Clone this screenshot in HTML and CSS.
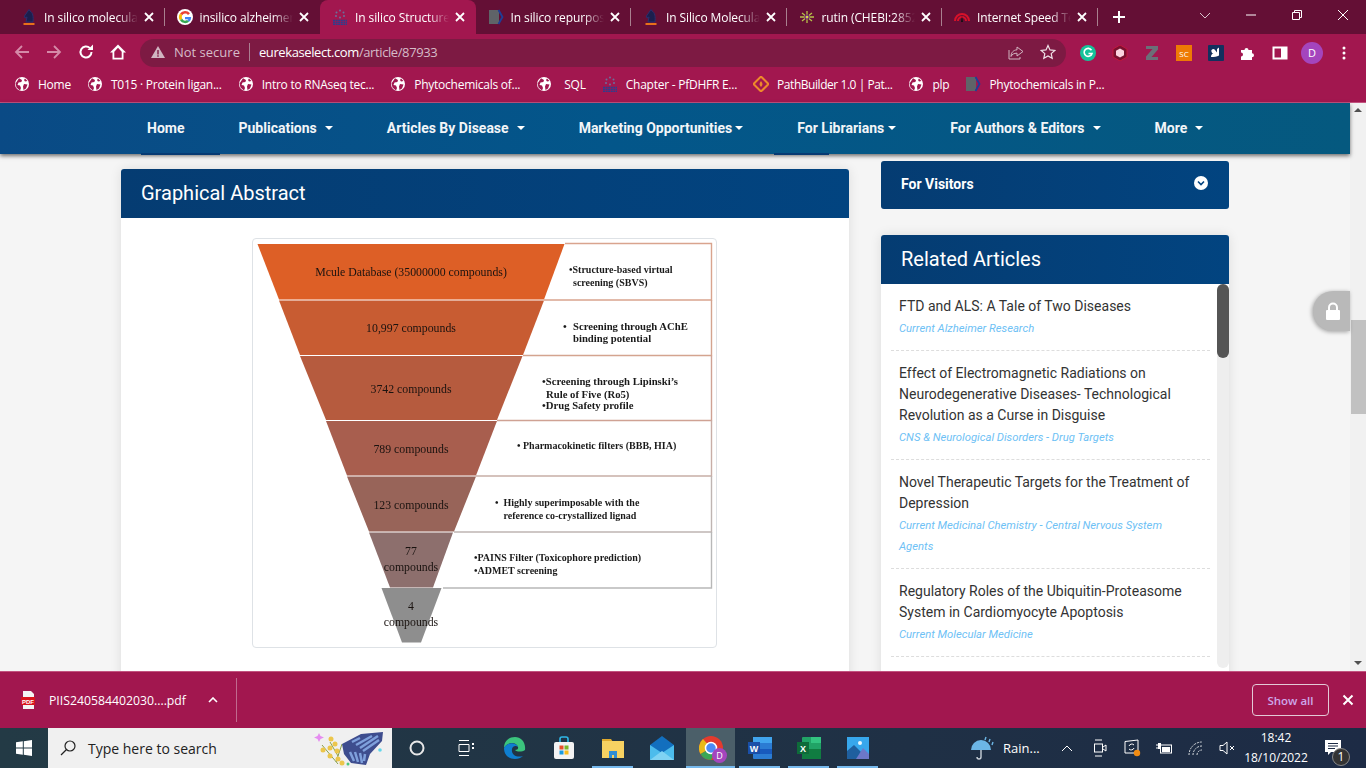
FILE: index.html
```html
<!DOCTYPE html>
<html lang="en">
<head>
  <meta charset="UTF-8">
  <meta name="viewport" content="width=device-width, initial-scale=1.0">
  <title>In silico Structure</title>
  <link rel="stylesheet" href="styles.css">
</head>
<body>

<svg class="defs">
  <symbol id="globe" viewBox="0 0 16 16">
    <circle cx="8" cy="8" r="7" fill="#fff"/>
    <path d="M5 2.200 8 4 7.400 6 4.500 6.500 3.500 9 6 9.500 7 12 6 14.500 2.500 11.500 1.500 7.500ZM10 8l3.500.5L12 12.500 9.500 14 9 10.500ZM11 2.500l2.500 2.500-2.500.5-1-1.500Z" fill="#a2174f"/>
  </symbol>
  <symbol id="close" viewBox="0 0 12 12">
    <path d="M2 2l8 8M10 2l-8 8" stroke="#fff" stroke-width="1.800" fill="none"/>
  </symbol>
  <symbol id="bentham" viewBox="0 0 16 16">
    <g fill="#6a6f9c"><circle cx="8" cy="1.500" r="1"/><circle cx="4.500" cy="3.500" r="1"/><circle cx="11.500" cy="3.500" r="1"/><circle cx="4" cy="7" r="1"/><circle cx="12" cy="7" r="1"/><circle cx="8" cy="8.500" r="1"/></g>
    <path d="M1 11.500h14M1 13.500h14M1 15.500h14" stroke="#2c3f8f" stroke-width="1.300" stroke-dasharray="2 .6"/>
  </symbol>
  <symbol id="knight" viewBox="0 0 16 16">
    <path d="M5 13 6 8 4 9 3.500 7 7 2l1-1.500L9 2c3 1.500 3.500 6 3 11Z" fill="#1b1f4d" stroke="#2a2f6e"/>
    <rect x="2.500" y="14" width="11" height="2" fill="#e8701a"/>
  </symbol>
  <symbol id="book" viewBox="0 0 16 16">
    <path d="M1 1h9l1 2v10l-1 2H1Z" fill="#5f6368"/>
    <path d="M10.500 1 14.500 8l-4 7" fill="none" stroke="#1d3f9a" stroke-width="1.800"/>
  </symbol>
</svg>

<div class="tabstrip">
  <div class="tab sep"><svg class="fav"><use href="#knight"/></svg><span class="tab-title">In silico molecular</span><svg class="tab-x"><use href="#close"/></svg></div>
  <div class="tab">
    <svg class="fav" viewBox="0 0 16 16">
      <circle cx="8" cy="8" r="8" fill="#fff"/>
      <path d="M13 4.200A6.300 6.300 0 0 0 3 4.500L5.200 6.300A3.500 3.500 0 0 1 11 5.900Z" fill="#ea4335"/>
      <path d="M3 4.500a6.300 6.300 0 0 0 0 7L5.200 9.700a3.500 3.500 0 0 1 0-3.400Z" fill="#fbbc05"/>
      <path d="M3 11.500a6.300 6.300 0 0 0 9.200 1.200L10.100 11a3.500 3.500 0 0 1-4.900-1.300Z" fill="#34a853"/>
      <path d="M14.200 8H8v2.300h3.500a3 3 0 0 1-1.400 .7l2.100 1.700A6.300 6.300 0 0 0 14.200 8Z" fill="#4285f4"/>
    </svg>
    <span class="tab-title">insilico alzheimer</span><svg class="tab-x"><use href="#close"/></svg></div>
  <div class="tab active"><svg class="fav"><use href="#bentham"/></svg><span class="tab-title">In silico Structure</span><svg class="tab-x"><use href="#close"/></svg></div>
  <div class="tab sep"><svg class="fav"><use href="#book"/></svg><span class="tab-title">In silico repurpos</span><svg class="tab-x"><use href="#close"/></svg></div>
  <div class="tab sep"><svg class="fav"><use href="#knight"/></svg><span class="tab-title">In Silico Molecula</span><svg class="tab-x"><use href="#close"/></svg></div>
  <div class="tab sep">
    <svg class="fav" viewBox="0 0 16 16"><path d="M8 2v12M3 4l10 8M13 4 3 12M1 8h14" stroke="#b7c24a" stroke-width="1.300"/><circle cx="8" cy="8" r="2.500" fill="#64107a"/><circle cx="8" cy="8" r="1.500" fill="#d7d84a"/></svg>
    <span class="tab-title">rutin (CHEBI:2852</span><svg class="tab-x"><use href="#close"/></svg></div>
  <div class="tab sep">
    <svg class="fav" viewBox="0 0 16 16"><path d="M1 12a7 7 0 0 1 14 0M4 12a4 4 0 0 1 8 0" fill="none" stroke="#d8112a" stroke-width="2"/><path d="M7 13 8 7l1 6Z" fill="#111"/></svg>
    <span class="tab-title">Internet Speed Te</span><svg class="tab-x"><use href="#close"/></svg></div>
  <svg class="new-tab" viewBox="0 0 14 14"><path d="M7 1v12M1 7h12" stroke="#fff" stroke-width="2"/></svg>
  <div class="win-controls">
    <svg viewBox="0 0 12 12"><path d="M1 4l5 5 5-5" fill="none" stroke="#d9c3cd"/></svg>
    <svg viewBox="0 0 12 12"><path d="M1 6h10" stroke="#fff"/></svg>
    <svg viewBox="0 0 12 12"><path d="M1.500 3.500h7v7h-7zM3.500 3.500v-2h7v7h-2" fill="none" stroke="#fff"/></svg>
    <svg viewBox="0 0 12 12"><path d="M1 1l10 10M11 1 1 11" stroke="#fff"/></svg>
  </div>
</div>

<div class="toolbar">
  <svg class="tool" viewBox="0 0 16 16"><path d="M15 8H2M8 2 2 8l6 6" fill="none" stroke="#d58aa8" stroke-width="1.800"/></svg>
  <svg class="tool" viewBox="0 0 16 16"><path d="M1 8h13M8 2l6 6-6 6" fill="none" stroke="#d58aa8" stroke-width="1.800"/></svg>
  <svg class="tool" viewBox="0 0 16 16"><path d="M13.500 8a5.500 5.500 0 1 1-1.600-3.900" fill="none" stroke="#fff" stroke-width="2"/><path d="M9.500 6H15V.5Z" fill="#fff"/></svg>
  <svg class="tool" viewBox="0 0 16 16"><path d="M8 .5 0 8.500h2.500V15.500h11V8.500H16ZM4.300 13.700V7.800L8 3.800l3.700 4v5.900Z" fill="#fff"/></svg>
  <div class="omnibox">
    <svg class="warn" viewBox="0 0 14 14"><path d="M7 1 14 13H0Z" fill="#d1b5c1"/><path d="M6.300 5h1.400v4.500H6.300zM6.300 10.300h1.400v1.400H6.300z" fill="#7d1a43"/></svg>
    <span class="not-secure">Not secure</span>
    <span class="url"><b>eurekaselect.com</b>/article/87933</span>
    <svg class="omni-icon" viewBox="0 0 16 16"><path d="M9 3l6 4.500L9 12V9.200C6 9.200 4 10.200 3 12.500 3 8.500 5.500 6 9 5.800ZM1 6v9h11v-2" fill="none" stroke="#d1b5c1"/></svg>
    <svg class="omni-icon" viewBox="0 0 16 16"><path d="M8 1.500l2 4.400 4.800.5-3.600 3.200 1 4.700L8 11.900l-4.200 2.400 1-4.700L1.200 6.400 6 5.900Z" fill="none" stroke="#efe3e8" stroke-width="1.200"/></svg>
  </div>
  <div class="extensions">
    <svg viewBox="0 0 16 16"><circle cx="8" cy="8" r="8" fill="#15c39a"/><path d="M11.500 5.200A4 4 0 1 0 12 8.500H8.500" fill="none" stroke="#fff" stroke-width="1.600"/></svg>
    <svg viewBox="0 0 16 16"><path d="M8 0l7 4v8l-7 4-7-4V4Z" fill="#7a1030" stroke="#c2183f"/><path d="M8 3.500l4 2.200v4.600l-4 2.200-4-2.200V5.700Z" fill="#fbd3df"/></svg>
    <svg viewBox="0 0 16 16"><path d="M2 1h12v3.500L7.500 12H14v3H2v-3.500L8.500 4H2Z" fill="#6b6f78"/></svg>
    <svg viewBox="0 0 16 16"><rect width="16" height="16" fill="#ee7a05"/><text class="sc-text" x="8" y="11.500">SC</text></svg>
    <svg viewBox="0 0 16 16"><rect width="16" height="16" rx="1" fill="#12305e"/><path d="M3 12c3 0 6-.5 8-1.500V2.500L9 4v3.500L7 5a2 2 0 1 0-1 3c-2 .5-3 2-3 4Z" fill="#fff"/></svg>
    <svg viewBox="0 0 16 16"><path d="M1 5h3.500a2 2 0 1 1 4 0H12v3.300a2 2 0 1 1 0 4V15H1v-3.500a2 2 0 1 0 0-4Z" fill="#fff"/></svg>
    <svg viewBox="0 0 16 16"><rect x="1.500" y="2.500" width="13" height="11" fill="none" stroke="#fff" stroke-width="2"/><rect x="9" y="3" width="5" height="10" fill="#fff"/></svg>
    <span class="avatar">D</span>
    <svg viewBox="0 0 16 16"><circle cx="8" cy="3" r="1.500" fill="#fff"/><circle cx="8" cy="8" r="1.500" fill="#fff"/><circle cx="8" cy="13" r="1.500" fill="#fff"/></svg>
  </div>
</div>

<div class="bookmarks">
  <a class="bm"><svg><use href="#globe"/></svg>Home</a>
  <a class="bm"><svg><use href="#globe"/></svg>T015 · Protein ligan...</a>
  <a class="bm"><svg><use href="#globe"/></svg>Intro to RNAseq tec...</a>
  <a class="bm"><svg><use href="#globe"/></svg>Phytochemicals of...</a>
  <a class="bm sql"><svg><use href="#globe"/></svg>SQL</a>
  <a class="bm"><svg><use href="#bentham"/></svg>Chapter - PfDHFR E...</a>
  <a class="bm pathway"><svg viewBox="0 0 16 16"><path d="M8 .5 15.500 8 8 15.500.5 8Z" fill="none" stroke="#ee8a2a" stroke-width="2"/><path d="M8 5c2 2.500 2 4 0 6-2-2-2-3.500 0-6Z" fill="#ee8a2a"/></svg>PathBuilder 1.0 | Pat...</a>
  <a class="bm"><svg><use href="#globe"/></svg>plp</a>
  <a class="bm"><svg><use href="#book"/></svg>Phytochemicals in P...</a>
</div>

<div class="viewport">
  <div class="site">
    <nav class="mainnav">
      <a>Home</a>
      <a>Publications<i class="caret"></i></a>
      <a>Articles By Disease<i class="caret"></i></a>
      <a>Marketing Opportunities<i class="caret tight"></i></a>
      <a>For Librarians<i class="caret mid"></i></a>
      <a>For Authors &amp; Editors<i class="caret"></i></a>
      <a>More<i class="caret"></i></a>
      <span class="nav-mark one"></span>
      <span class="nav-mark two"></span>
    </nav>

    <div class="content">
      <section class="card main-card">
        <h2 class="card-head">Graphical Abstract</h2>
        <div class="abstract-body">
          <div class="thumb">
            <svg class="funnel" viewBox="253 239 463 408">
              <g class="boxes">
                <path class="b1" d="M565 243.500H711.500V300H544"/>
                <path class="b2" d="M711.500 300V355.500H523"/>
                <path class="b3" d="M711.500 355.500V420.500H497"/>
                <path class="b4" d="M711.500 420.500V476H476"/>
                <path class="b5" d="M711.500 476V532H454"/>
                <path class="b6" d="M711.500 532V588H443"/>
              </g>
              <polygon fill="#dd5f26" points="257.500,244 564.500,244 544,299.500 279,299.500"/>
              <polygon fill="#c85c32" points="279,300.500 544,300.500 523,355 300,355"/>
              <polygon fill="#b65b3e" points="300,356 522.500,356 497,420 326,420"/>
              <polygon fill="#a85e4e" points="326,421 497,421 476,475.500 347,475.500"/>
              <polygon fill="#986459" points="347,476.500 476,476.500 454,531.500 369,531.500"/>
              <polygon fill="#8d6f6d" points="369,532.500 453,532.500 433,587.500 390,587.500"/>
              <polygon fill="#8e8e8e" points="381.500,588 441.500,588 421,642.500 402,642.500"/>
              <g class="f-label">
                <text x="411" y="276">Mcule Database (35000000 compounds)</text>
                <text x="411" y="332">10,997 compounds</text>
                <text x="411" y="393">3742 compounds</text>
                <text x="411" y="453">789 compounds</text>
                <text x="411" y="509">123 compounds</text>
                <text x="411" y="555">77</text>
                <text x="411" y="571">compounds</text>
                <text x="411" y="610">4</text>
                <text x="411" y="626">compounds</text>
              </g>
              <g class="f-note">
                <text x="569" y="273">•Structure-based virtual</text>
                <text x="573" y="286">screening (SBVS)</text>
                <g class="f-big">
                  <text x="563" y="330">•</text>
                  <text x="573" y="330">Screening through AChE</text>
                  <text x="573" y="342">binding potential</text>
                  <text x="542" y="385">•Screening through Lipinski’s</text>
                  <text x="546" y="398">Rule of Five (Ro5)</text>
                  <text x="542" y="409">•Drug Safety profile</text>
                </g>
                <text x="517" y="449">• Pharmacokinetic filters (BBB, HIA)</text>
                <text x="495" y="506">•</text>
                <text x="503.500" y="506">Highly superimposable with the</text>
                <text x="503.500" y="519">reference co-crystallized lignad</text>
                <text x="474" y="561">•PAINS Filter (Toxicophore prediction)</text>
                <text x="474" y="574">•ADMET screening</text>
              </g>
            </svg>
          </div>
        </div>
      </section>

      <aside class="sidebar">
        <div class="visitors">
          <span>For Visitors</span>
          <svg viewBox="0 0 14 14"><circle cx="7" cy="7" r="7" fill="#fff"/><path d="M4 5.500l3 3 3-3" fill="none" stroke="#03437f" stroke-width="1.600"/></svg>
        </div>
        <section class="card related">
          <h2 class="card-head">Related Articles</h2>
          <div class="related-body">
            <ul class="related-list">
              <li>
                <a class="rel-title">FTD and ALS: A Tale of Two Diseases</a>
                <a class="rel-source">Current Alzheimer Research</a>
              </li>
              <li>
                <a class="rel-title">Effect of Electromagnetic Radiations on Neurodegenerative Diseases- Technological Revolution as a Curse in Disguise</a>
                <a class="rel-source">CNS &amp; Neurological Disorders - Drug Targets</a>
              </li>
              <li>
                <a class="rel-title">Novel Therapeutic Targets for the Treatment of Depression</a>
                <a class="rel-source">Current Medicinal Chemistry - Central Nervous System Agents</a>
              </li>
              <li>
                <a class="rel-title">Regulatory Roles of the Ubiquitin-Proteasome System in Cardiomyocyte Apoptosis</a>
                <a class="rel-source">Current Molecular Medicine</a>
              </li>
            </ul>
            <div class="rel-scroll"><div class="rel-thumb"></div></div>
          </div>
        </section>
      </aside>
    </div>

    <div class="lock-badge">
      <svg viewBox="0 0 16 18"><path d="M4 8V5.500a4 4 0 0 1 8 0V8" fill="none" stroke="#fff" stroke-width="2"/><rect x="1" y="8" width="14" height="10" rx="1" fill="#fff"/></svg>
    </div>
  </div>

  <div class="page-scroll">
    <i class="arrow up"></i>
    <div class="page-track"><div class="page-thumb"></div></div>
    <i class="arrow down"></i>
  </div>
</div>

<div class="downloads">
  <svg class="pdf-icon" viewBox="0 0 14 18"><path d="M2 0h8l3 3v15H2Z" fill="#f4f4f4"/><rect y="6" width="14" height="8" fill="#d9141e"/><text class="pdf-text" x="7" y="12.500">PDF</text></svg>
  <span class="dl-name">PIIS240584402030....pdf</span>
  <svg class="dl-chev" viewBox="0 0 10 6"><path d="M1 5l4-4 4 4" fill="none" stroke="#fff" stroke-width="1.600"/></svg>
  <span class="dl-sep"></span>
  <button class="show-all" type="button">Show all</button>
  <svg class="dl-close" viewBox="0 0 12 12"><path d="M1.500 1.500l9 9M10.500 1.500l-9 9" stroke="#fff" stroke-width="2"/></svg>
</div>

<div class="taskbar">
  <div class="start">
    <svg viewBox="0 0 16 16"><path d="M0 2.300 6.800 1.300v6.200H0ZM7.800 1.200 16 0v7.500H7.800ZM0 8.500h6.800v6.200L0 13.700ZM7.800 8.500H16V16l-8.200-1.200Z" fill="#fff"/></svg>
  </div>
  <div class="searchbox">
    <svg class="search-icon" viewBox="0 0 16 16"><circle cx="10" cy="6" r="5" fill="none" stroke="#222" stroke-width="1.200"/><path d="M6.500 9.500 1 15" stroke="#222" stroke-width="1.200"/></svg>
    <span>Type here to search</span>
    <svg class="butterfly" viewBox="0 0 70 36">
      <path d="M3 3l1.500 3L8 7.500 4.500 9 3 12 1.500 9-2 7.500 1.500 6Z" fill="#e58cf0"/>
      <path d="M6 15 22 34M14 12l8 14M26 14l-6 18" stroke="#8aa04a" fill="none"/>
      <g fill="#ecc64b"><circle cx="15" cy="9" r="2.500"/><circle cx="19" cy="14" r="2.500"/><circle cx="14" cy="18" r="2.500"/><circle cx="21" cy="21" r="2.500"/><circle cx="7" cy="20" r="2.500"/><circle cx="14" cy="26" r="2.500"/><circle cx="22" cy="29" r="2.500"/><circle cx="26" cy="33" r="2.500"/></g>
      <path d="M26 14 45 4 67 2 66 11 54 24 50 35 35 33 28 24Z" fill="#3e4d8e"/>
      <g stroke="#7fa0dc" stroke-width="2.500"><path d="M36 12 44 8M40 15 56 6M44 18 62 6M47 21 63 10"/><path d="M34 22 38 31M39 22 42 32M44 23 46 33M49 24 48 31"/></g>
      <circle cx="64" cy="20" r="1.800" fill="#62d6ea"/><circle cx="32" cy="34" r="1.500" fill="#4cc77a"/>
    </svg>
  </div>
  <div class="task-icons">
    <span class="task"><svg viewBox="-4 -4 24 24"><circle cx="8" cy="8" r="6.500" fill="none" stroke="#e8e8e8" stroke-width="2"/></svg></span>
    <span class="task"><svg viewBox="-3 -3 24 24"><path d="M2 1.500h10M2 16.500h10M2 5.500h10v7H2Z" fill="none" stroke="#fff"/><rect x="15" y="4" width="2" height="2" fill="#fff"/><rect x="15" y="8" width="2" height="2" fill="#fff"/></svg></span>
    <span class="task"><svg viewBox="0 0 24 24"><path d="M22 14C23 6 18 1 12 1 5 1 1 6 1 12c3-6 12-7 14-1 .6 2-1 3-3 3 2 2 7 2 10 0Z" fill="#3bc47d"/><path d="M1 12c0 7 5 11 11 11 3 0 6-1 8-3-6 2-12-1-11-7 .5-3 4-4 6-2-2-5-11-5-14 1Z" fill="#0f7fd0"/></svg></span>
    <span class="task"><svg viewBox="0 0 24 24"><path d="M8 6V3a2 2 0 0 1 2-2h4a2 2 0 0 1 2 2v3" fill="none" stroke="#2fb8e8" stroke-width="1.600"/><rect x="2" y="6" width="20" height="17" rx="2" fill="#f3f3f3"/><rect x="7.500" y="9.500" width="4" height="4" fill="#e8502a"/><rect x="12.500" y="9.500" width="4" height="4" fill="#7cb82a"/><rect x="7.500" y="14.500" width="4" height="4" fill="#1a9be0"/><rect x="12.500" y="14.500" width="4" height="4" fill="#f8bb1d"/></svg></span>
    <span class="task open"><svg viewBox="0 0 24 24"><path d="M1 3h9l2 3H1Z" fill="#e0a92c"/><rect x="1" y="5" width="22" height="17" fill="#f7d262"/><path d="M8 22v-7h8v7h-3v-3h-2v3Z" fill="#2f8ed6"/></svg></span>
    <span class="task"><svg viewBox="0 0 24 24"><path d="M12 0 24 9v15H0V9Z" fill="#126fbe"/><path d="M0 9l12 8 12-8v15H0Z" fill="#4cbcec"/><path d="M0 24l12-9 12 9Z" fill="#7fd3f3"/></svg></span>
    <span class="task open current"><svg viewBox="0 0 24 24"><circle cx="12" cy="12" r="12" fill="#e33b2e"/><path d="M12 12 1.500 18A12 12 0 0 1 4 3Z" fill="#e9b91b"/><path d="M12 24A12 12 0 0 1 1.500 18L12 12l6 .5Z" fill="#3aa655"/><circle cx="12" cy="12" r="5.500" fill="#4c8bf5" stroke="#fff" stroke-width="1.500"/></svg><b class="chrome-d">D</b></span>
    <span class="task open"><svg viewBox="0 0 24 24"><rect x="5" y="1" width="19" height="22" rx="1" fill="#2b7cd3"/><rect x="5" y="1" width="19" height="6" fill="#41a5ee"/><rect x="5" y="13" width="19" height="5" fill="#185abd"/><rect y="6" width="12" height="12" fill="#1a4fa8"/><text class="tile-text" x="6" y="15.500">W</text></svg></span>
    <span class="task open"><svg viewBox="0 0 24 24"><rect x="5" y="1" width="19" height="22" rx="1" fill="#21a366"/><rect x="14" y="1" width="10" height="6" fill="#33c481"/><rect x="5" y="13" width="19" height="10" fill="#107c41"/><rect y="6" width="12" height="12" fill="#0e6b39"/><text class="tile-text" x="6" y="15.500">X</text></svg></span>
    <span class="task open"><svg viewBox="0 0 24 24"><rect x="1" y="1" width="22" height="22" fill="#37a7ec"/><path d="M1 23V15l7-6 8 8 2 6Z" fill="#1f5f9e"/><path d="M10 23 17 12l6 6v5Z" fill="#6d78c9"/><circle cx="14" cy="7" r="2" fill="#eaf6fd"/></svg></span>
  </div>
  <div class="tray">
    <svg class="weather" viewBox="0 0 24 24"><path d="M1 14a10 10 0 0 1 20 0Z" fill="#6cb6e6"/><path d="M11 14v7a2 2 0 0 1-4 0" fill="none" stroke="#c8d0d8" stroke-width="1.400"/><path d="M16 1l-1 3M20 3l-1 3M23 6l-1 3" stroke="#6cb6e6" stroke-width="1.400"/></svg>
    <span class="rain">Rain...</span>
    <svg class="tray-i chev" viewBox="0 0 12 8"><path d="M1 7l5-5 5 5" fill="none" stroke="#fff"/></svg>
    <svg class="tray-i" viewBox="0 0 16 18"><path d="M3 1h7M3 17h7" stroke="#fff"/><rect x="2.500" y="5" width="8" height="8" fill="none" stroke="#fff"/><path d="M11 8l3-2v6l-3-2" fill="none" stroke="#fff"/></svg>
    <svg class="tray-i" viewBox="0 0 18 18"><path d="M2 2.500 15 1v13H2Z" fill="none" stroke="#fff"/><path d="M6 7a3 3 0 0 1 5-1M11 9a3 3 0 0 1-5 1" fill="none" stroke="#fff"/><circle cx="14" cy="14" r="3.200" fill="#f28c13"/></svg>
    <svg class="tray-i" viewBox="0 0 18 18"><path d="M1 6h2M1 9h2" stroke="#fff"/><rect x="3" y="4" width="3" height="6" fill="#fff"/><rect x="5.500" y="6" width="11" height="8" fill="none" stroke="#fff"/><rect x="7" y="8" width="8" height="5" fill="#fff"/></svg>
    <svg class="tray-i" viewBox="0 0 18 18"><path d="M2 16A13 13 0 0 1 15 3M6 16a9 9 0 0 1 9-9M10 16a5 5 0 0 1 5-5" fill="none" stroke="#d9dde0" stroke-dasharray="2 1"/></svg>
    <svg class="tray-i" viewBox="0 0 18 18"><path d="M1 6.500h3L8 3v12L4 11.500H1Z" fill="none" stroke="#fff"/><path d="M11 7l4 4M15 7l-4 4" stroke="#fff"/></svg>
    <div class="clock"><span>18:42</span><span>18/10/2022</span></div>
    <span class="notify">
      <svg viewBox="0 0 16 16"><path d="M0 0h16v12H6l-3 3v-3H0Z" fill="#fff"/><path d="M3 3.500h10M3 6h10M3 8.500h7" stroke="#1d2b45"/></svg>
      <b>1</b>
    </span>
  </div>
</div>

</body>
</html>
```

FILE: styles.css
```css
html, body {
  margin: 0;
  height: 100%;
}
body {
  width: 1366px;
  height: 768px;
  overflow: hidden;
  display: flex;
  flex-direction: column;
  font-family: "Open Sans", "Noto Sans", sans-serif;
  background-color: #a2174f;
  color: #fff;
}
.defs {
  display: none;
}
svg {
  display: block;
  flex: none;
}

/* browser tabs */
.tabstrip {
  height: 34px;
  flex: none;
  display: flex;
  align-items: stretch;
  padding-left: 9px;
  background-color: #640f35;
}
.tab {
  width: 155.5px;
  box-sizing: border-box;
  display: flex;
  align-items: center;
  padding: 0 10px 0 12px;
  position: relative;
  font-size: 12px;
}
.tab.active {
  background-color: #a2174f;
  border-radius: 8px 8px 0 0;
}
.tab.sep::after {
  content: "";
  position: absolute;
  right: 0;
  top: 8px;
  bottom: 8px;
  width: 1px;
  background-color: #a9808f;
}
.fav {
  width: 16px;
  height: 16px;
  margin-right: 7px;
}
.tab-title {
  flex: 1;
  min-width: 0;
  overflow: hidden;
  white-space: nowrap;
  letter-spacing: -.1px;
  -webkit-mask-image: linear-gradient(90deg, #000 78%, transparent);
  mask-image: linear-gradient(90deg, #000 78%, transparent);
}
.tab-x {
  width: 12px;
  height: 12px;
  margin-left: 5px;
}
.new-tab {
  width: 14px;
  height: 14px;
  margin: 10px 0 0 14px;
}
.win-controls {
  margin-left: auto;
  display: flex;
  gap: 34px;
  padding: 9px 17px 0 0;
}
.win-controls svg {
  width: 12px;
  height: 12px;
}

/* address bar */
.toolbar {
  height: 34px;
  flex: none;
  display: flex;
  align-items: center;
  padding-left: 14px;
}
.tool {
  width: 16px;
  height: 16px;
  margin: 2px 16px 0 0;
}
.omnibox {
  width: 926px;
  height: 28px;
  margin: 4px 0 0 -2px;
  box-sizing: border-box;
  display: flex;
  align-items: center;
  padding: 0 10px 2px 11px;
  border-radius: 14px;
  background-color: #7d1a43;
  font-size: 13px;
}
.warn {
  width: 14px;
  height: 14px;
  margin-right: 9px;
}
.not-secure {
  color: #d6bcc8;
  padding-right: 9px;
  border-right: 1px solid #ab7f92;
  line-height: 18px;
}
.url {
  margin-left: 9px;
  flex: 1;
  color: #d6bcc8;
  letter-spacing: -.4px;
}
.url b {
  font-weight: 400;
  color: #fff;
}
.omni-icon {
  width: 16px;
  height: 16px;
  margin-left: 16px;
}
.extensions {
  display: flex;
  align-items: center;
  gap: 16px;
  margin: 4px 0 0 14px;
}
.extensions svg {
  width: 16px;
  height: 16px;
}
.sc-text {
  font: 8px "Open Sans", sans-serif;
  fill: #fff;
  text-anchor: middle;
}
.avatar {
  width: 22px;
  height: 22px;
  margin: 0 -3px;
  border-radius: 50%;
  background-color: #a445bd;
  font-size: 11px;
  line-height: 22px;
  text-align: center;
}

/* bookmarks */
.bookmarks {
  height: 35px;
  flex: none;
  box-sizing: border-box;
  display: flex;
  align-items: center;
  gap: 16px;
  padding: 0 0 2px 14px;
  border-bottom: 1px solid #c2537f;
  font-size: 12px;
  letter-spacing: -.25px;
}
.bm {
  display: flex;
  align-items: center;
  gap: 8px;
  white-space: nowrap;
}
.bm svg {
  width: 16px;
  height: 16px;
}
.bm.sql {
  gap: 12px;
}
.bm.pathway {
  letter-spacing: -.45px;
}

/* the site itself */
.viewport {
  height: 568px;
  flex: none;
  display: flex;
}
.site {
  flex: 1;
  min-width: 0;
  position: relative;
  display: flex;
  flex-direction: column;
  background-color: #f5f5f5;
  font-family: Roboto, "Liberation Sans", sans-serif;
}
.mainnav {
  height: 51px;
  flex: none;
  box-sizing: border-box;
  position: relative;
  z-index: 2;
  display: flex;
  align-items: center;
  gap: 54px;
  padding: 0 0 2px 147px;
  background: linear-gradient(90deg, #0a4a85, #03568a 45%, #05597f);
  box-shadow: 0 2px 4px rgba(0, 0, 0, .55);
  font-size: 14px;
  font-weight: 700;
  white-space: nowrap;
}
.mainnav a {
  display: flex;
  align-items: center;
  color: #f2f5f8;
}
.caret {
  width: 0;
  height: 0;
  margin-left: 8px;
  border-left: 4px solid transparent;
  border-right: 4px solid transparent;
  border-top: 4px solid #fff;
}
.caret.tight {
  margin-left: 3px;
}
.caret.mid {
  margin-left: 4px;
}
.nav-mark {
  position: absolute;
  bottom: -1px;
  height: 2px;
  background-color: #063a73;
}
.nav-mark.one {
  left: 141px;
  width: 79px;
}
.nav-mark.two {
  left: 774px;
  width: 55px;
}
.content {
  flex: 1;
  min-height: 0;
  overflow: hidden;
  display: flex;
  align-items: flex-start;
  gap: 32px;
  padding-left: 121px;
}
.card {
  background-color: #fff;
  border-radius: 3px 3px 0 0;
  box-shadow: 0 0 12px rgba(0, 0, 0, .1);
}
.card-head {
  margin: 0;
  height: 49px;
  padding-left: 20px;
  border-radius: 3px 3px 0 0;
  background: linear-gradient(90deg, #053c72, #024480);
  font-size: 20px;
  font-weight: 400;
  line-height: 49px;
}
.main-card {
  width: 728px;
  height: 540px;
  margin-top: 15px;
}
.abstract-body {
  display: flex;
  justify-content: center;
  padding: 20px 1px 0 0;
}
.thumb {
  width: 465px;
  height: 410px;
  box-sizing: border-box;
  border: 1px solid #dee2e6;
  border-radius: 4px;
  background-color: #fff;
}
.funnel {
  width: 463px;
  height: 408px;
  filter: blur(.3px);
}
.boxes path {
  fill: none;
  stroke-width: 1.400;
}
.boxes .b1 { stroke: #d9a48e; }
.boxes .b2 { stroke: #d4a48f; }
.boxes .b3 { stroke: #cfa294; }
.boxes .b4 { stroke: #c8aea7; }
.boxes .b5 { stroke: #bfb5b2; }
.boxes .b6 { stroke: #b8b8b8; }
.f-label {
  font: 11.800px "Liberation Serif", serif;
  fill: #1a1310;
  text-anchor: middle;
}
.f-note {
  font: 700 10px "Liberation Serif", serif;
  fill: #1a1a1a;
}
.f-big {
  font-size: 10.700px;
}
.sidebar {
  width: 348px;
  margin-top: 7px;
}
.visitors {
  height: 48px;
  box-sizing: border-box;
  display: flex;
  justify-content: space-between;
  padding: 15px 21px 0 20px;
  border-radius: 3px;
  background: linear-gradient(90deg, #053c72, #024480);
  font-size: 14px;
  font-weight: 700;
}
.visitors svg {
  width: 14px;
  height: 14px;
}
.related {
  margin-top: 26px;
}
.related-body {
  display: flex;
  height: 400px;
}
.related-list {
  flex: 1;
  min-width: 0;
  list-style: none;
  margin: 0;
  padding: 0 7px 0 10px;
}
.related-list li {
  padding: 12px 20px 11px 8px;
  border-bottom: 1px dashed #ddd;
  font-size: 14px;
  line-height: 21px;
}
.rel-title {
  display: block;
  color: #333;
}
.rel-source {
  display: block;
  margin-top: 1px;
  color: #6ec1f5;
  font-size: 11.250px;
  font-style: italic;
}
.rel-scroll {
  width: 12px;
  height: 384px;
  border-radius: 6px;
  background-color: #eee;
}
.rel-thumb {
  height: 74px;
  border-radius: 6px;
  background-color: #555;
}
.lock-badge {
  position: absolute;
  right: 0;
  top: 188px;
  z-index: 1;
  width: 37px;
  height: 40px;
  box-sizing: border-box;
  padding: 11px 0 0 12px;
  border-radius: 20px 0 0 20px;
  background-color: #b9b9b9;
  box-shadow: -1px 1px 4px rgba(0, 0, 0, .35);
}
.lock-badge svg {
  width: 16px;
  height: 18px;
}

/* page scrollbar */
.page-scroll {
  width: 16px;
  flex: none;
  display: flex;
  flex-direction: column;
  align-items: center;
  background-color: #f1f1f1;
}
.page-track {
  flex: 1;
  width: 100%;
  padding-top: 208px;
  box-sizing: border-box;
}
.page-thumb {
  height: 94px;
  margin-left: 1px;
  background-color: #c1c1c1;
}
.arrow {
  width: 0;
  height: 0;
  border-left: 4px solid transparent;
  border-right: 4px solid transparent;
}
.arrow.up {
  margin-top: 5px;
  border-bottom: 4px solid #505050;
}
.arrow.down {
  margin-bottom: 6px;
  border-top: 4px solid #505050;
}

/* download shelf */
.downloads {
  height: 57px;
  flex: none;
  box-sizing: border-box;
  display: flex;
  align-items: center;
  padding-left: 21px;
  border-top: 1px solid #c2537f;
  font-size: 12.250px;
}
.pdf-icon {
  width: 14px;
  height: 18px;
  margin-right: 14px;
}
.pdf-text {
  font: 700 6px "Liberation Sans", sans-serif;
  fill: #fff;
  text-anchor: middle;
}
.dl-chev {
  width: 10px;
  height: 6px;
  margin-left: 22px;
}
.dl-sep {
  width: 1px;
  height: 44px;
  margin-left: 18px;
  background-color: #c06a8e;
}
.show-all {
  width: 77px;
  height: 32px;
  margin-left: auto;
  padding: 0;
  border: 1px solid #e3c9d6;
  border-radius: 4px;
  background: none;
  color: #cda8ea;
  font: 600 11.500px "Open Sans", sans-serif;
}
.dl-close {
  width: 12px;
  height: 12px;
  margin: 0 12px 0 13px;
}

/* windows taskbar */
.taskbar {
  height: 40px;
  flex: none;
  display: flex;
  align-items: stretch;
  background: linear-gradient(90deg, #233a45, #1d2b45);
}
.start {
  width: 48px;
  display: flex;
  align-items: center;
  justify-content: center;
}
.start svg {
  width: 16px;
  height: 16px;
}
.searchbox {
  width: 344px;
  box-sizing: border-box;
  display: flex;
  align-items: center;
  padding-left: 12px;
  background-color: #f0f0f0;
  color: #222;
  font-size: 14px;
}
.search-icon {
  width: 16px;
  height: 16px;
  margin-right: 12px;
}
.butterfly {
  width: 70px;
  height: 36px;
  margin-left: auto;
  margin-right: 6px;
  overflow: visible;
}
.task-icons {
  display: flex;
}
.task {
  width: 49px;
  position: relative;
  display: flex;
  align-items: center;
  justify-content: center;
}
.task svg {
  width: 24px;
  height: 24px;
}
.task.open::after {
  content: "";
  position: absolute;
  left: 4px;
  right: 4px;
  bottom: 0;
  height: 2px;
  background-color: #76b9ed;
}
.task.current {
  background-color: #4b5f69;
}
.task.current::after {
  left: 0;
  right: 0;
}
.chrome-d {
  position: absolute;
  left: 26px;
  top: 20px;
  width: 15px;
  height: 15px;
  border-radius: 50%;
  background-color: #a445bd;
  font-size: 9px;
  font-weight: 400;
  line-height: 15px;
  text-align: center;
}
.tile-text {
  font: 700 9px "Liberation Sans", sans-serif;
  fill: #fff;
  text-anchor: middle;
}
.tray {
  margin-left: auto;
  display: flex;
  align-items: center;
  padding-right: 17px;
  font-size: 12px;
}
.weather {
  width: 24px;
  height: 24px;
  margin-right: 9px;
}
.rain {
  width: 37px;
  margin-right: 21px;
  font-size: 13px;
}
.tray-i {
  width: 18px;
  height: 18px;
  margin-right: 14px;
}
.tray-i.chev {
  width: 12px;
  height: 8px;
  margin-right: 18px;
}
.clock {
  width: 70px;
  margin: 0 6px 0 -10px;
  display: flex;
  flex-direction: column;
  align-items: center;
  line-height: 20px;
}
.notify {
  width: 32px;
  position: relative;
  display: flex;
  justify-content: center;
}
.notify svg {
  width: 16px;
  height: 16px;
}
.notify b {
  position: absolute;
  left: 15px;
  top: 8px;
  width: 16px;
  height: 16px;
  border-radius: 50%;
  background-color: #333;
  border: 1px solid #888;
  font-size: 12px;
  font-weight: 400;
  line-height: 16px;
  text-align: center;
}
```
